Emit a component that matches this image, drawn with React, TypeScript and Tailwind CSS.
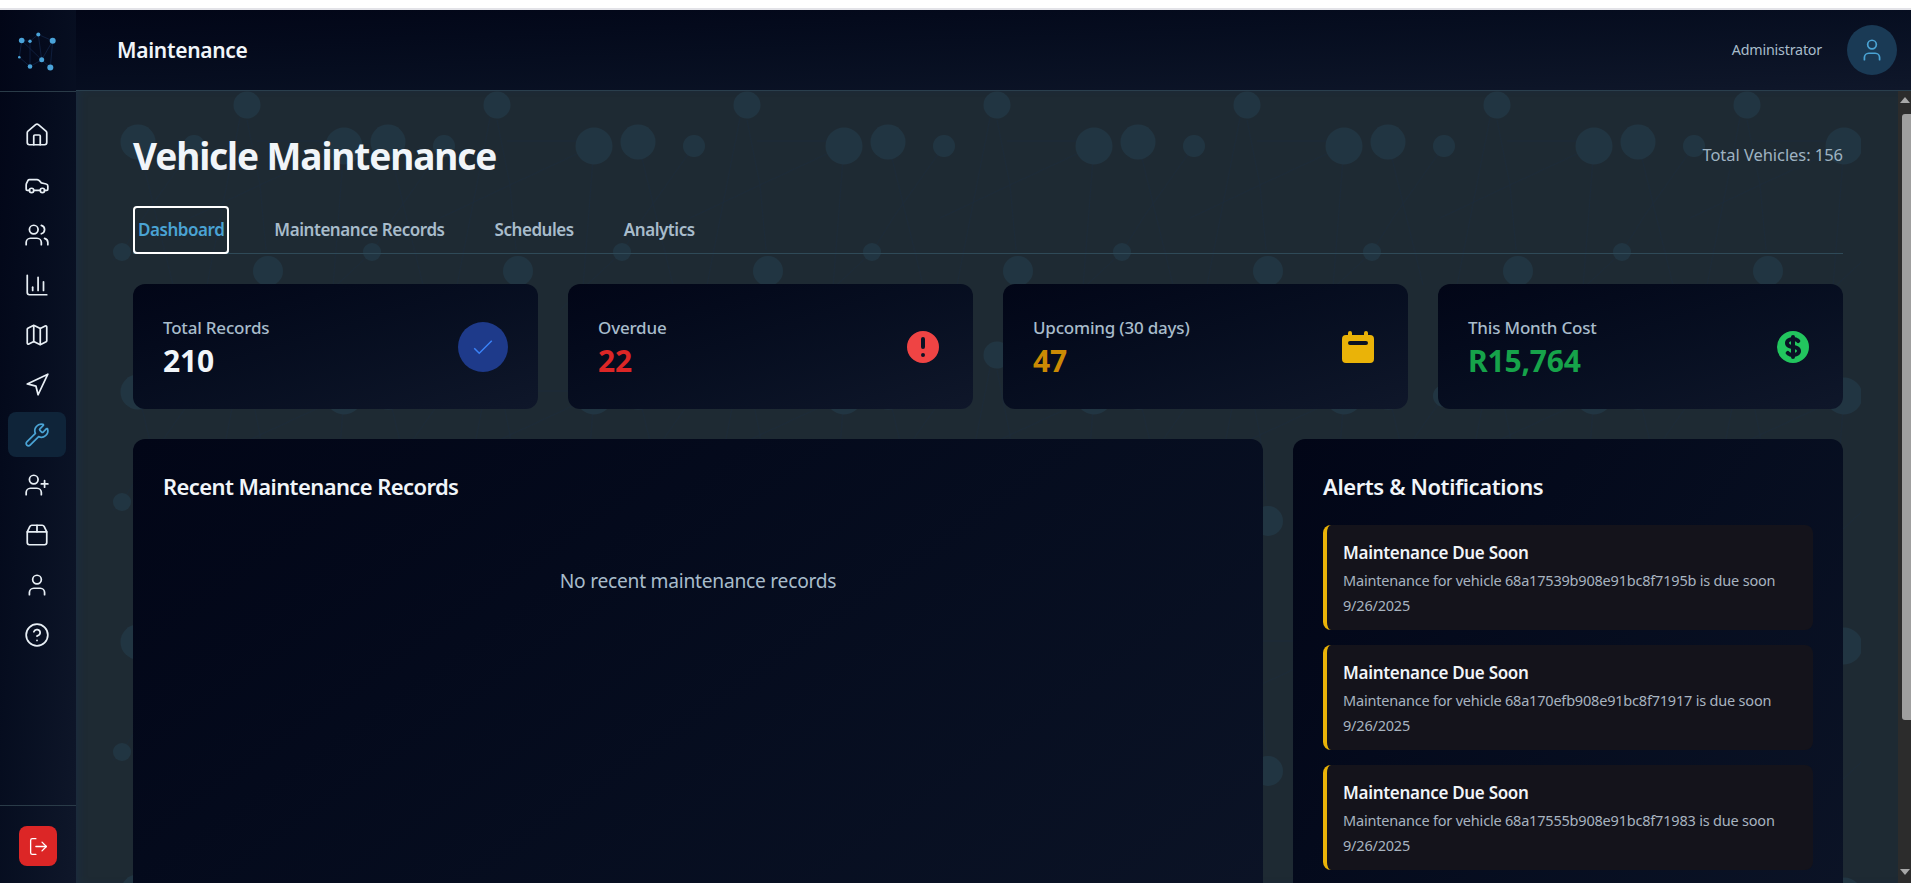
import { Car, ChartColumn, CircleHelp, House, LogOut, Map, Navigation, Package2, User, UserPlus, Users, Wrench } from 'lucide-react'

const navItems = [
  { icon: House },
  { icon: Car },
  { icon: Users },
  { icon: ChartColumn },
  { icon: Map },
  { icon: Navigation },
  { icon: Wrench, active: true },
  { icon: UserPlus },
  { icon: Package2 },
  { icon: User },
  { icon: CircleHelp },
]

const alerts = [
  'Maintenance for vehicle 68a17539b908e91bc8f7195b is due soon',
  'Maintenance for vehicle 68a170efb908e91bc8f71917 is due soon',
  'Maintenance for vehicle 68a17555b908e91bc8f71983 is due soon',
]

function Logo() {
  return (
    <svg width="46" height="46" viewBox="0 0 46 46" fill="none">
      <g stroke="#12264a" strokeWidth="0.7">
        <path d="M5.7 12.5L14 13.2L22.3 6.5L36.7 12.8L34.3 39.5L25.7 31.8L14 38.5L3.3 29.2L5.7 12.5" />
        <path d="M22.3 6.5L25.7 31.8L36.7 12.8M14 13.2L14 38.5M5.7 12.5L25.7 31.8" />
      </g>
      <g fill="#4aa3d9">
        <circle cx="5.7" cy="12.5" r="2.8" />
        <circle cx="14" cy="13.2" r="1.7" />
        <circle cx="22.3" cy="6.5" r="2" />
        <circle cx="36.7" cy="12.8" r="3" />
        <circle cx="3.3" cy="29.2" r="1.3" />
        <circle cx="25.7" cy="31.8" r="2.5" />
        <circle cx="14" cy="38.5" r="2.3" />
        <circle cx="34.3" cy="39.5" r="3" />
      </g>
    </svg>
  )
}

// network texture behind the main area, 250px tile, stops short of both side edges
function NetworkBackground() {
  return (
    <svg className="absolute left-[37px] top-0 h-full w-[calc(100%-74px)] blur-[0.6px]" aria-hidden="true">
      <defs>
        <pattern id="net" width="250" height="250" patternUnits="userSpaceOnUse" patternTransform="translate(-113 -91)">
          <g stroke="#1b2a3a" strokeWidth="1" fill="none" opacity="0.7">
            <path d="M94 146L82 300M94 -104L82 50" />
            <path d="M240 118L207 285M240 -132L207 35" />
            <path d="M-3 120L10 185L18 271M247 120L260 185L268 271" />
            <path d="M10 185L94 146M260 185L344 146M10 185L-60 218M260 185L190 218" />
            <path d="M7 141L80 141M257 141L330 141" />
            <path d="M138 142L173 285M138 -108L173 35" />
            <path d="M194 146L145 215L122 252M122 2L60 60" />
          </g>
          <g fill="#213542">
            <circle cx="94" cy="146" r="18.5" />
            <circle cx="138" cy="142" r="17.5" />
            <circle cx="194" cy="146" r="11" />
            <circle cx="247" cy="105" r="13.5" />
            <circle cx="-3" cy="105" r="13.5" />
            <circle cx="122" cy="2" r="9" />
            <circle cx="122" cy="252" r="9" />
            <circle cx="18" cy="21" r="15" />
          </g>
        </pattern>
      </defs>
      <rect width="100%" height="100%" fill="url(#net)" />
    </svg>
  )
}

function StatCard({ label, value, valueClass, children }: { label: string; value: string; valueClass: string; children: React.ReactNode }) {
  return (
    <div className="flex h-[125px] items-center justify-between rounded-xl bg-gradient-to-br from-[#020617] to-[#0f172a] px-[30px]">
      <div className="mt-[2px]">
        <div className="text-[17px] leading-[24px] font-medium tracking-[-0.2px] text-[#a8bccb]">{label}</div>
        <div className={`mt-[2px] text-[30px] leading-[38px] font-bold tracking-[-0.2px] ${valueClass}`}>{value}</div>
      </div>
      {children}
    </div>
  )
}

const tabClass = 'flex h-[48px] items-center px-[5px] text-[17px] font-semibold tracking-[-0.45px]'

export default function App() {
  return (
    <div className="flex h-[883px] w-full flex-col overflow-hidden bg-white font-['Noto_Sans',sans-serif]">
      <div className="h-[10px] shrink-0 border-b-2 border-[#e3e3e8] bg-white" />
      <div className="flex min-h-0 flex-1">
        {/* sidebar */}
        <aside className="flex w-[76px] shrink-0 flex-col bg-gradient-to-br from-[#020617] to-[#0f172a]">
          <div className="flex h-[82px] shrink-0 items-center justify-center border-b border-[#2a3b48] pl-[1px]">
            <Logo />
          </div>
          <nav className="flex flex-1 flex-col gap-[5px] px-[8px] pt-[20px]">
            {navItems.map((item, i) => {
              const Icon = item.icon
              return (
                <div
                  key={i}
                  className={`flex h-[45px] w-[58px] items-center justify-center rounded-lg ${
                    item.active ? 'bg-[#0f2439] text-[#4aa3d4]' : 'text-[#e8eff5]'
                  }`}
                >
                  <Icon size={26} strokeWidth={1.6} />
                </div>
              )
            })}
          </nav>
          <div className="flex h-[78px] shrink-0 justify-center border-t border-[#2a3b48] pt-[20px]">
            <div className="flex h-[40px] w-[38px] items-center justify-center rounded-lg bg-[#dc2626] text-white">
              <LogOut size={21} strokeWidth={1.5} />
            </div>
          </div>
        </aside>

        <div className="flex min-w-0 flex-1 flex-col">
          {/* header */}
          <header className="flex h-[81px] shrink-0 items-center justify-between border-b border-[#2a3f4d] bg-gradient-to-br from-[#020617] to-[#0f172a] pl-[41px] pr-[14px]">
            <h1 className="mt-[2px] text-[21px] font-semibold tracking-[-0.3px] text-[#f1f5f9]">Maintenance</h1>
            <div className="flex items-center gap-[25px]">
              <span className="text-[14.3px] tracking-[-0.2px] text-[#a8bccb]">Administrator</span>
              <div className="flex h-[50px] w-[50px] items-center justify-center rounded-full bg-[#1a3a55] text-[#4aa3d4]">
                <User size={26} strokeWidth={1.6} />
              </div>
            </div>
          </header>

          <div className="flex min-h-0 flex-1">
            <main className="relative min-w-0 flex-1 overflow-hidden bg-[#1e2a33] pl-[57px] pr-[55px] pt-[34px] shadow-[inset_6px_0_10px_-4px_rgba(20,50,90,0.35)]">
              <NetworkBackground />
              <div className="relative">
                <div className="flex h-[60px] items-center justify-between">
                  <h2 className="mt-[2px] text-[37px] font-bold tracking-[-1.1px] text-[#f1f5f9]">Vehicle Maintenance</h2>
                  <span className="text-[16.5px] tracking-[-0.05px] text-[#9fb3c2]">Total Vehicles: 156</span>
                </div>

                <div className="mt-[21px] flex h-[48px] gap-[40px] border-b border-[#2f4a58]">
                  <div className={`${tabClass} rounded-[4px] border-b-2 border-[#4aa3d4] pt-[2px] text-[#4aa3d4] outline-2 -outline-offset-2 outline-white`}>
                    Dashboard
                  </div>
                  <div className={`${tabClass} text-[#a8bccb]`}>Maintenance Records</div>
                  <div className={`${tabClass} text-[#a8bccb]`}>Schedules</div>
                  <div className={`${tabClass} text-[#a8bccb]`}>Analytics</div>
                </div>

                <div className="mt-[30px] grid grid-cols-4 gap-[30px]">
                  <StatCard label="Total Records" value="210" valueClass="text-[#f1f5f9]">
                    <div className="flex h-[50px] w-[50px] items-center justify-center rounded-full bg-[#1e3a8a]">
                      <svg width="30" height="30" viewBox="0 0 24 24" fill="none" stroke="#3b82f6" strokeWidth="1.2">
                        <path d="M5 13l4 4L19 7" />
                      </svg>
                    </div>
                  </StatCard>
                  <StatCard label="Overdue" value="22" valueClass="text-[#dc2626]">
                    <svg width="40" height="40" viewBox="0 0 20 20" fill="#ef4444">
                      <path fillRule="evenodd" clipRule="evenodd" d="M18 10a8 8 0 11-16 0 8 8 0 0116 0zm-7 4a1 1 0 11-2 0 1 1 0 012 0zm-1-9a1 1 0 00-1 1v4a1 1 0 102 0V6a1 1 0 00-1-1z" />
                    </svg>
                  </StatCard>
                  <StatCard label="Upcoming (30 days)" value="47" valueClass="text-[#ca8a04]">
                    <svg width="40" height="40" viewBox="0 0 20 20" fill="#eab308">
                      <path fillRule="evenodd" clipRule="evenodd" d="M6 2a1 1 0 00-1 1v1H4a2 2 0 00-2 2v10a2 2 0 002 2h12a2 2 0 002-2V6a2 2 0 00-2-2h-1V3a1 1 0 10-2 0v1H7V3a1 1 0 00-1-1zm0 5a1 1 0 000 2h8a1 1 0 100-2H6z" />
                    </svg>
                  </StatCard>
                  <StatCard label="This Month Cost" value="R15,764" valueClass="text-[#16a34a]">
                    <svg width="40" height="40" viewBox="0 0 20 20" fill="#22c55e">
                      <path d="M8.433 7.418c.155-.103.346-.196.567-.267v1.698a2.305 2.305 0 01-.567-.267C8.07 8.34 8 8.114 8 8c0-.114.07-.34.433-.582zM11 12.849v-1.698c.22.071.412.164.567.267.364.243.433.468.433.582 0 .114-.07.34-.433.582a2.305 2.305 0 01-.567.267z" />
                      <path fillRule="evenodd" clipRule="evenodd" d="M10 18a8 8 0 100-16 8 8 0 000 16zm1-13a1 1 0 10-2 0v.092a4.535 4.535 0 00-1.676.662C6.602 6.234 6 7.009 6 8c0 .99.602 1.765 1.324 2.246.48.32 1.054.545 1.676.662v1.941c-.391-.127-.68-.317-.843-.504a1 1 0 10-1.51 1.31c.562.649 1.413 1.076 2.353 1.253V15a1 1 0 102 0v-.092a4.535 4.535 0 001.676-.662C13.398 13.766 14 12.991 14 12c0-.99-.602-1.765-1.324-2.246A4.535 4.535 0 0011 9.092V7.151c.391.127.68.317.843.504a1 1 0 101.511-1.31c-.563-.649-1.413-1.076-2.354-1.253V5z" />
                    </svg>
                  </StatCard>
                </div>

                <div className="mt-[30px] grid min-h-[800px] grid-cols-[1fr_550px] gap-[30px]">
                  <section className="rounded-xl bg-gradient-to-br from-[#020617] to-[#0f172a] px-[30px] pt-[29px]">
                    <h3 className="text-[22px] leading-[36px] font-semibold tracking-[-0.6px] text-[#f1f5f9]">Recent Maintenance Records</h3>
                    <p className="mt-[63px] text-center text-[19.2px] tracking-[-0.25px] text-[#a8bccb]">No recent maintenance records</p>
                  </section>
                  <section className="rounded-xl bg-gradient-to-br from-[#020617] to-[#0f172a] px-[30px] pt-[29px]">
                    <h3 className="text-[22px] leading-[36px] font-semibold tracking-[-0.4px] text-[#f1f5f9]">Alerts &amp; Notifications</h3>
                    <div className="mt-[21px] flex flex-col gap-[15px]">
                      {alerts.map((text, i) => (
                        <div key={i} className="h-[105px] rounded-lg border-l-4 border-[#eab308] bg-[#14131b] px-[16px] pt-[14px]">
                          <div className="text-[17px] leading-[28px] font-semibold tracking-[-0.3px] text-[#f1f5f9]">Maintenance Due Soon</div>
                          <div className="text-[14.5px] leading-[26px] tracking-[-0.2px] text-[#a8b4c0]">{text}</div>
                          <div className="text-[14.5px] leading-[25px] tracking-[-0.2px] text-[#a8b4c0]">9/26/2025</div>
                        </div>
                      ))}
                    </div>
                  </section>
                </div>
              </div>
            </main>

            {/* scrollbar as painted in the reference */}
            <div className="flex w-[13px] shrink-0 flex-col items-end bg-[#2c2c2c]">
              <div className="mt-[6px] h-0 w-0 self-center border-x-[5px] border-b-[6px] border-x-transparent border-b-[#a8a8a8]" />
              <div className="mt-[11px] h-[606px] w-[9px] rounded-l-[3px] bg-[#9f9f9f]" />
              <div className="mt-[149px] h-0 w-0 self-center border-x-[5px] border-t-[6px] border-x-transparent border-t-[#a8a8a8]" />
            </div>
          </div>
        </div>
      </div>
    </div>
  )
}
